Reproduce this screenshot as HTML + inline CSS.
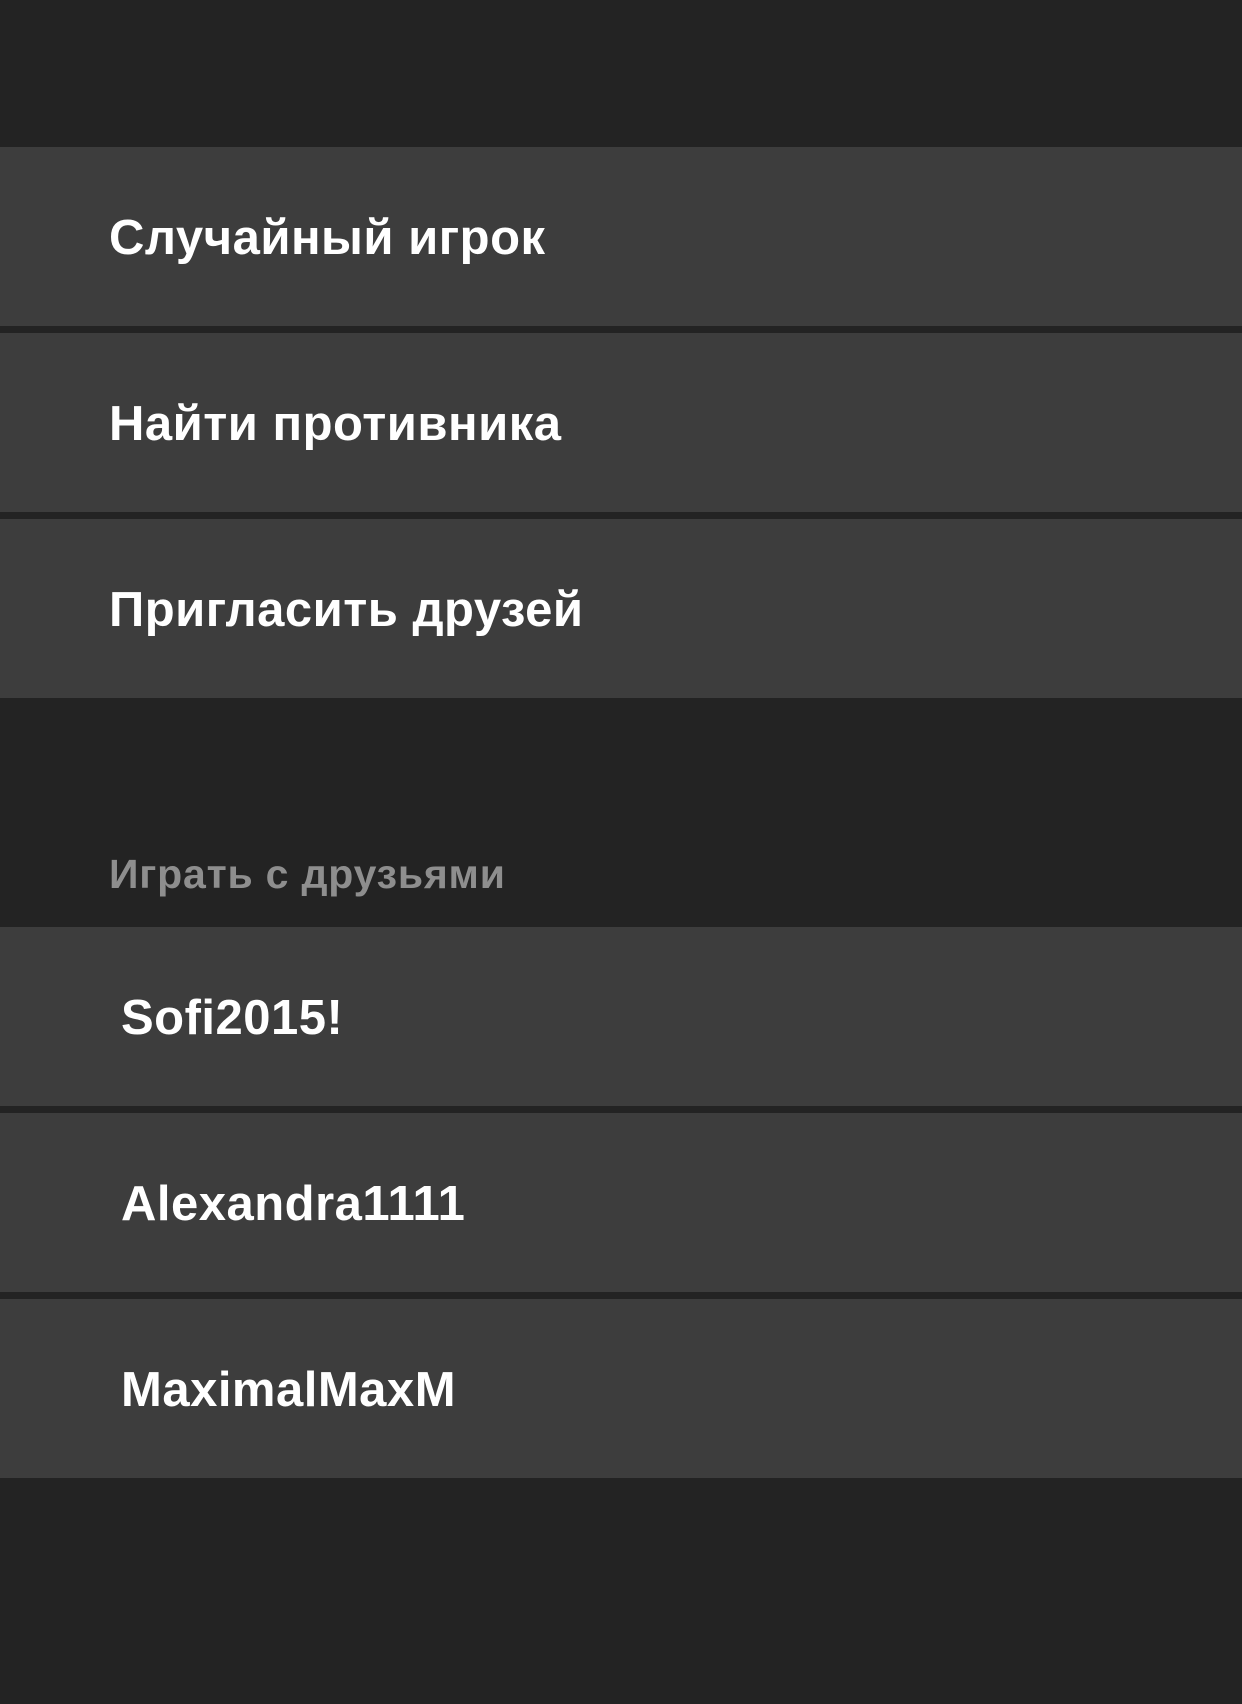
<!DOCTYPE html>
<html><head><meta charset="utf-8"><style>
html,body{margin:0;padding:0;width:1242px;height:1704px;background:#232323;overflow:hidden;font-family:"Liberation Sans",sans-serif;}
.row{position:absolute;left:0;width:1242px;height:179px;background:#3d3d3d;color:#fff;font-size:49px;line-height:182px;font-weight:bold;letter-spacing:0.5px;box-sizing:border-box;}
.hdr{position:absolute;left:109px;top:849px;font-size:41px;line-height:50px;color:#8e8e8e;font-weight:bold;letter-spacing:0.8px;}
</style></head><body>
<div class="row" style="top:147px;padding-left:109px;">Случайный игрок</div>
<div class="row" style="top:333px;padding-left:109px;">Найти противника</div>
<div class="row" style="top:519px;padding-left:109px;">Пригласить друзей</div>
<div class="hdr">Играть с друзьями</div>
<div class="row" style="top:927px;padding-left:121px;">Sofi2015!</div>
<div class="row" style="top:1113px;padding-left:121px;">Alexandra1111</div>
<div class="row" style="top:1299px;padding-left:121px;">MaximalMaxM</div>
</body></html>
